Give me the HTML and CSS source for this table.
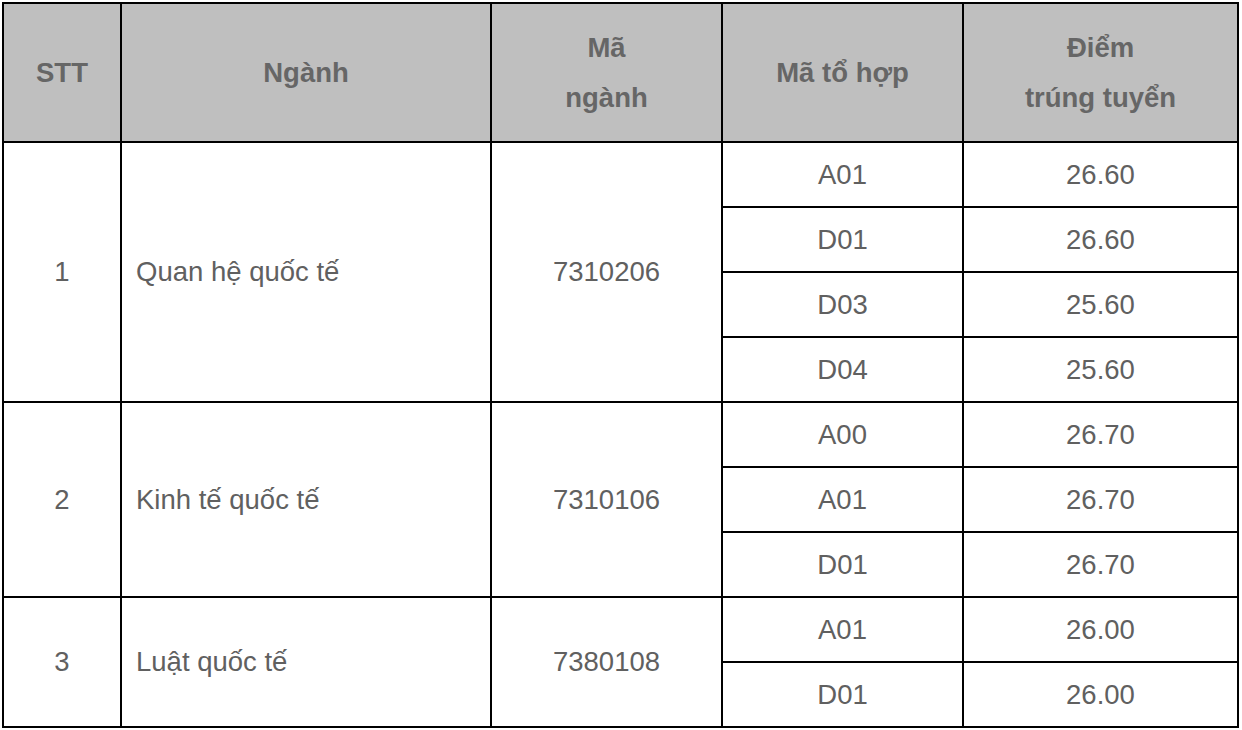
FILE: index.html
```html
<!DOCTYPE html>
<html lang="vi">
<head>
<meta charset="utf-8">
<link rel="stylesheet" href="styles.css">
</head>
<body>
<table class="scores">
  <colgroup>
    <col class="c-stt">
    <col class="c-name">
    <col class="c-code">
    <col class="c-combo">
    <col class="c-score">
  </colgroup>
  <thead>
    <tr>
      <th>STT</th>
      <th>Ngành</th>
      <th>Mã<br>ngành</th>
      <th>Mã tổ hợp</th>
      <th>Điểm<br>trúng tuyển</th>
    </tr>
  </thead>
  <tbody>
    <tr>
      <td class="center" rowspan="4">1</td>
      <td class="name" rowspan="4">Quan hệ quốc tế</td>
      <td class="center" rowspan="4">7310206</td>
      <td class="center">A01</td>
      <td class="center">26.60</td>
    </tr>
    <tr><td class="center">D01</td><td class="center">26.60</td></tr>
    <tr><td class="center">D03</td><td class="center">25.60</td></tr>
    <tr><td class="center">D04</td><td class="center">25.60</td></tr>
    <tr>
      <td class="center" rowspan="3">2</td>
      <td class="name" rowspan="3">Kinh tế quốc tế</td>
      <td class="center" rowspan="3">7310106</td>
      <td class="center">A00</td>
      <td class="center">26.70</td>
    </tr>
    <tr><td class="center">A01</td><td class="center">26.70</td></tr>
    <tr><td class="center">D01</td><td class="center">26.70</td></tr>
    <tr>
      <td class="center" rowspan="2">3</td>
      <td class="name" rowspan="2">Luật quốc tế</td>
      <td class="center" rowspan="2">7380108</td>
      <td class="center">A01</td>
      <td class="center">26.00</td>
    </tr>
    <tr><td class="center">D01</td><td class="center">26.00</td></tr>
  </tbody>
</table>
</body>
</html>
```

FILE: styles.css
```css
html, body {
  margin: 0;
  padding: 0;
  background: #ffffff;
}

body {
  padding: 2px 0 0 2px;
  font-family: "Liberation Sans", Arial, sans-serif;
  color: #606060;
}

.scores {
  border-collapse: separate;
  border-spacing: 0;
  border-left: 2px solid #000;
  border-top: 2px solid #000;
  table-layout: fixed;
  width: 1237px;
}

.c-stt { width: 118px; }
.c-name { width: 370px; }
.c-code { width: 231px; }
.c-combo { width: 241px; }
.c-score { width: 275px; }

.scores th,
.scores td {
  border-right: 2px solid #000;
  border-bottom: 2px solid #000;
  font-size: 27.5px;
  padding: 0;
  vertical-align: middle;
}

.scores th {
  background: #bfbfbf;
  font-weight: bold;
  height: 137px;
  line-height: 50px;
  text-align: center;
  color: #666666;
}

.scores td {
  height: 63px;
  line-height: 30px;
}

.center {
  text-align: center;
}

.name {
  text-align: left;
  padding-left: 14px !important;
}
```
